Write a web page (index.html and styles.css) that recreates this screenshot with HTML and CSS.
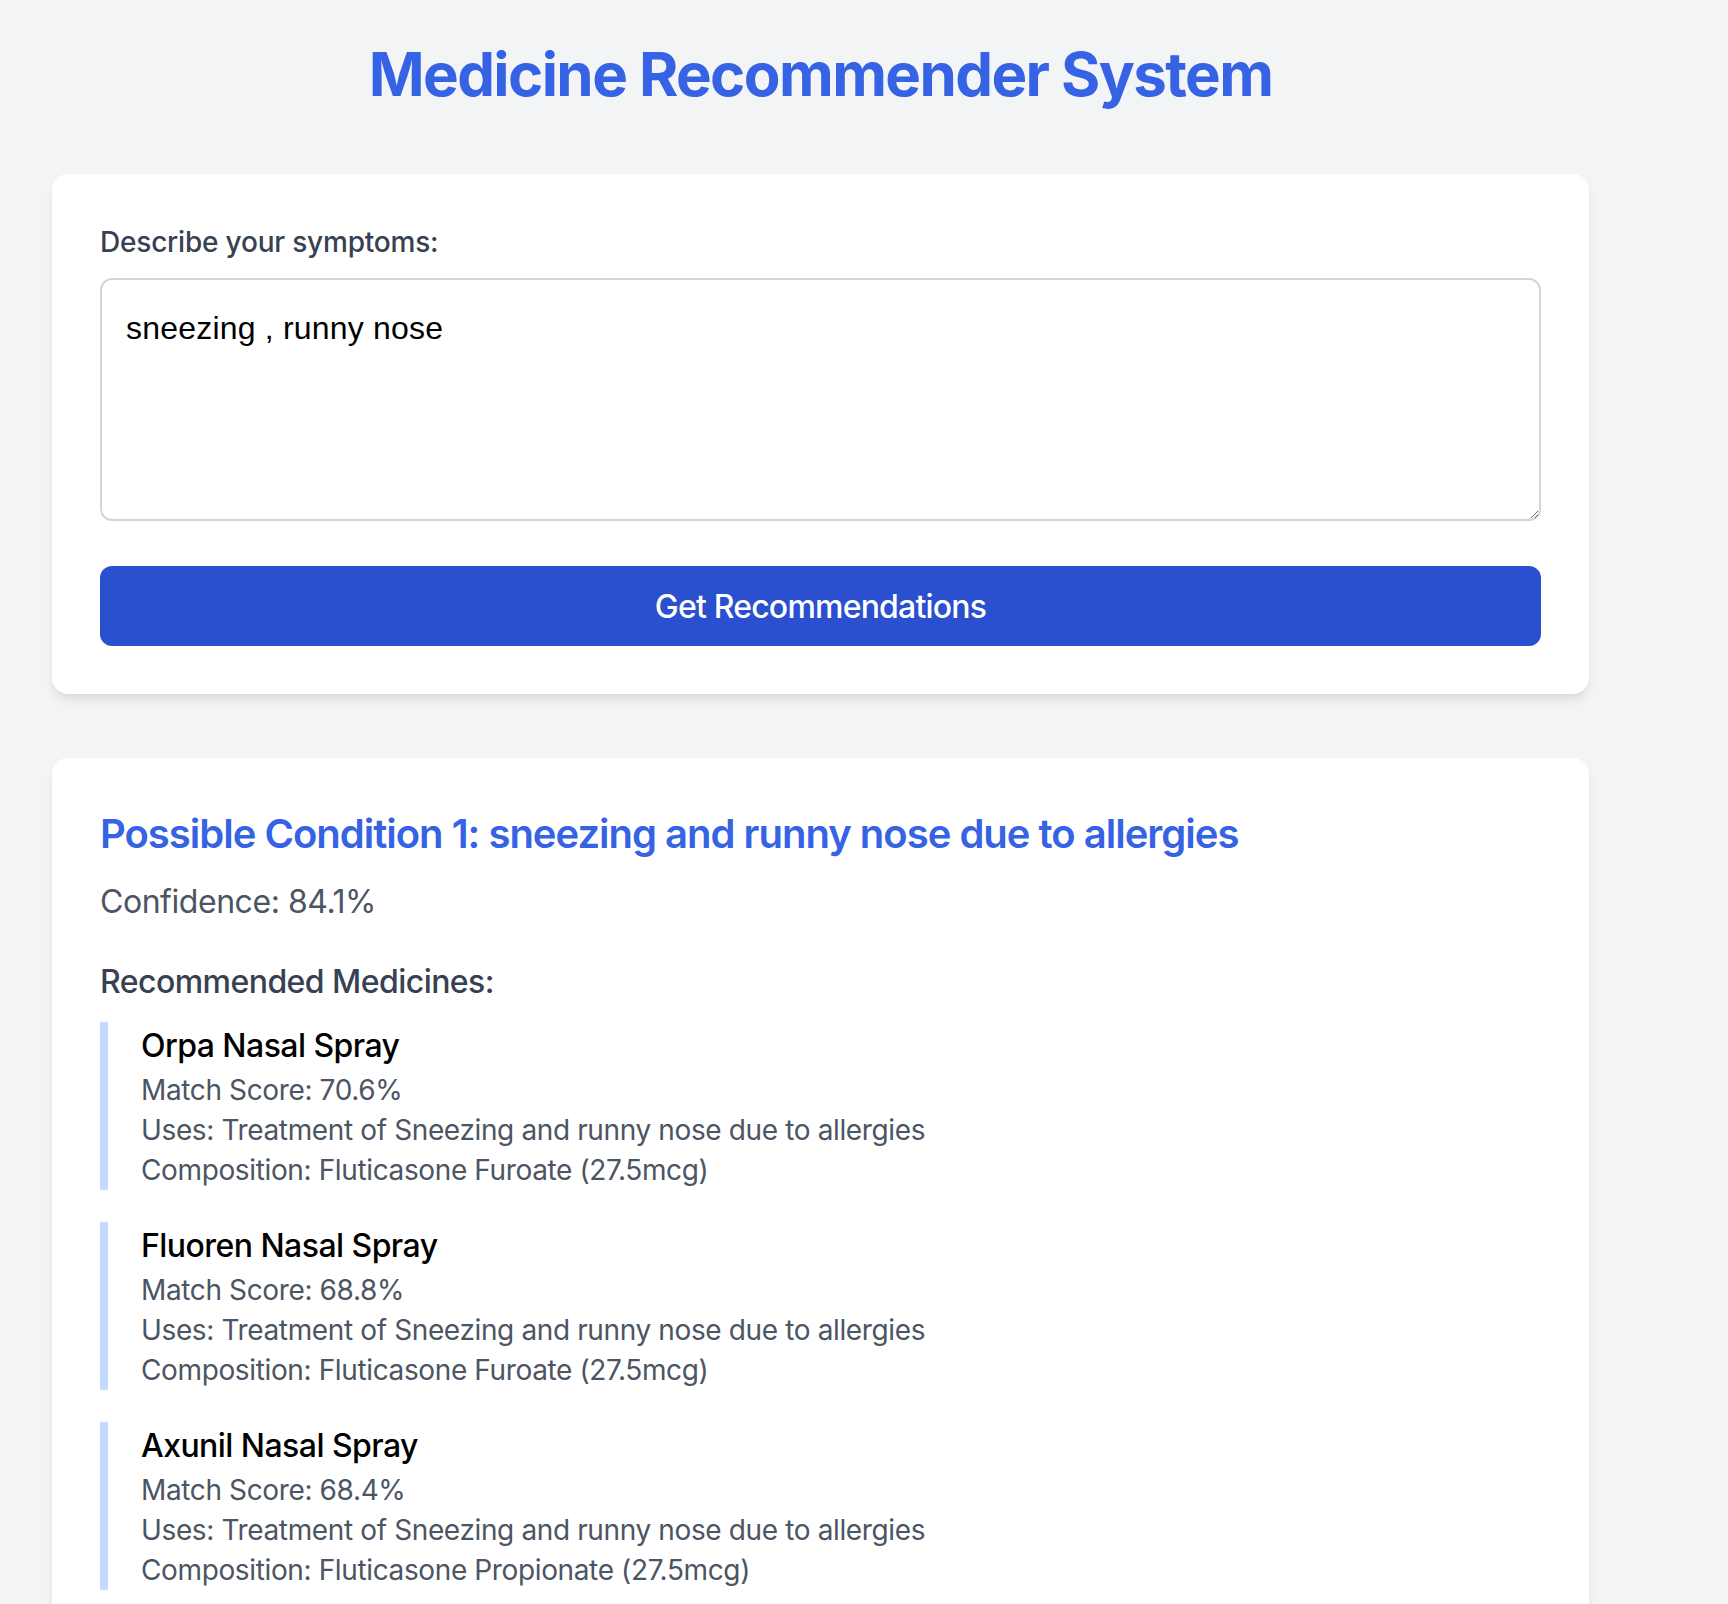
FILE: index.html
```html
<!DOCTYPE html>
<html lang="en">
<head>
<meta charset="utf-8">
<title>Medicine Recommender System</title>
<link rel="stylesheet" href="styles.css">
</head>
<body>
<div class="container">
  <h1 class="title">Medicine Recommender System</h1>

  <div class="card">
    <label class="field-label" for="symptoms">Describe your symptoms:</label>
    <textarea id="symptoms" class="symptoms" rows="4">sneezing , runny nose</textarea>
    <button class="submit" type="button">Get Recommendations</button>
  </div>

  <div class="card results">
    <h2 class="condition">Possible Condition 1: sneezing and runny nose due to allergies</h2>
    <p class="confidence">Confidence: 84.1%</p>
    <h3 class="rec-title">Recommended Medicines:</h3>
    <div class="meds">
      <div class="med">
        <div class="med-name">Orpa Nasal Spray</div>
        <div class="med-line">Match Score: 70.6%</div>
        <div class="med-line">Uses: Treatment of Sneezing and runny nose due to allergies</div>
        <div class="med-line">Composition: Fluticasone Furoate (27.5mcg)</div>
      </div>
      <div class="med">
        <div class="med-name">Fluoren Nasal Spray</div>
        <div class="med-line">Match Score: 68.8%</div>
        <div class="med-line">Uses: Treatment of Sneezing and runny nose due to allergies</div>
        <div class="med-line">Composition: Fluticasone Furoate (27.5mcg)</div>
      </div>
      <div class="med">
        <div class="med-name">Axunil Nasal Spray</div>
        <div class="med-line">Match Score: 68.4%</div>
        <div class="med-line">Uses: Treatment of Sneezing and runny nose due to allergies</div>
        <div class="med-line">Composition: Fluticasone Propionate (27.5mcg)</div>
      </div>
    </div>
  </div>
</div>
</body>
</html>
```
FILE: styles.css
```css
html, body {
  margin: 0;
  padding: 0;
  background: #f3f4f6;
  font-family: Inter, "Noto Sans", sans-serif;
}

.container {
  width: 1537px;
  margin-left: 52px;
  padding-top: 38px;
}

.title {
  margin: 0 0 64px;
  font-size: 60px;
  line-height: 72px;
  font-weight: 700;
  letter-spacing: -1.6px;
  text-align: center;
  color: #3563e3;
}

.card {
  background: #ffffff;
  border-radius: 16px;
  padding: 48px;
  box-shadow: 0 8px 12px -2px rgba(0, 0, 0, 0.08), 0 4px 8px -4px rgba(0, 0, 0, 0.08);
}

.card + .card {
  margin-top: 64px;
}

.field-label {
  display: block;
  margin-bottom: 16px;
  font-size: 28px;
  line-height: 40px;
  font-weight: 500;
  letter-spacing: -0.2px;
  color: #374151;
}

.symptoms {
  display: block;
  box-sizing: border-box;
  width: 100%;
  height: 243px;
  margin: 0;
  padding: 24px;
  border: 2px solid #d1d5db;
  border-radius: 12px;
  font-family: "Liberation Sans", Arial, sans-serif;
  font-size: 32px;
  line-height: 48px;
  letter-spacing: 0.2px;
  color: #000000;
  background: #ffffff;
  outline: none;
}

.submit {
  display: block;
  width: 100%;
  height: 80px;
  margin-top: 45px;
  border: none;
  border-radius: 12px;
  background: #2a4fcf;
  color: #ffffff;
  font-family: Inter, "Noto Sans", sans-serif;
  font-size: 32px;
  font-weight: 500;
  letter-spacing: -0.8px;
  cursor: pointer;
}

.condition {
  margin: 0 0 16px;
  font-size: 40px;
  line-height: 56px;
  font-weight: 600;
  letter-spacing: -1px;
  color: #3563e3;
}

.confidence {
  margin: 0 0 32px;
  font-size: 32px;
  line-height: 48px;
  letter-spacing: -0.45px;
  color: #4b5563;
}

.rec-title {
  margin: 0 0 16px;
  font-size: 32px;
  line-height: 48px;
  font-weight: 500;
  letter-spacing: -0.55px;
  color: #374151;
}

.meds {
  display: flex;
  flex-direction: column;
  gap: 32px;
}

.med {
  border-left: 8px solid #c3dafe;
  padding-left: 33px;
}

.med-name {
  font-size: 32px;
  line-height: 48px;
  font-weight: 500;
  letter-spacing: -0.55px;
  color: #000000;
}

.med-line {
  font-size: 28px;
  line-height: 40px;
  letter-spacing: -0.37px;
  color: #4b5563;
}
```
